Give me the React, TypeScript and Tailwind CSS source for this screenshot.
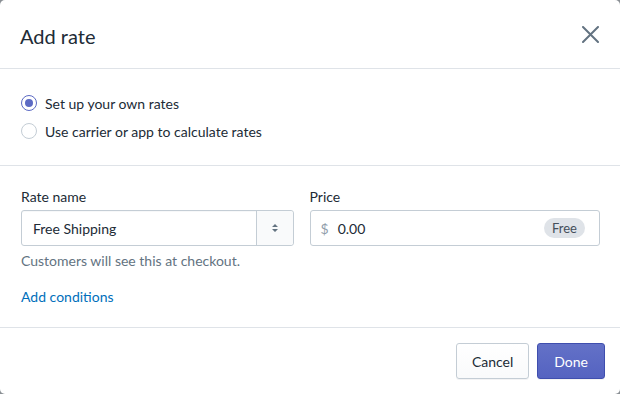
import React from "react";

export default function App() {
  return (
    <div className="w-[620px] h-[394px] bg-[#8a8f94]" style={{ fontFamily: 'Lato, "Noto Sans", sans-serif' }}>
      <div className="w-full h-full bg-white rounded-[5px] flex flex-col text-[#212b36]">
        <div className="h-[69px] flex items-center justify-between pl-5 pr-[21px] border-b border-[#dfe3e8] shrink-0">
          <div className="text-[20px] leading-[28px] mt-[4px]">Add rate</div>
          <svg width="17" height="17" viewBox="0 0 17 17" className="text-[#637381]">
            <path d="M1 1 L16 16 M16 1 L1 16" stroke="currentColor" strokeWidth="2" strokeLinecap="round" />
          </svg>
        </div>
        <div className="h-[97px] border-b border-[#dfe3e8] flex flex-col pl-[21px] pt-[26px] gap-[12px] text-[14px] shrink-0">
          <label className="flex items-center gap-[8px] h-[16px]">
            <span className="w-[16px] h-[16px] rounded-full border border-[#5c6ac4] flex items-center justify-center bg-white">
              <span className="w-[8px] h-[8px] rounded-full bg-[#5c6ac4]" />
            </span>
            <span>Set up your own rates</span>
          </label>
          <label className="flex items-center gap-[8px] h-[16px]">
            <span className="w-[16px] h-[16px] rounded-full border border-[#c4cdd5] bg-white" />
            <span>Use carrier or app to calculate rates</span>
          </label>
        </div>
        <div className="h-[162px] border-b border-[#dfe3e8] pt-[21px] px-[20px] shrink-0 text-[14px]">
          <div className="flex gap-[16px]">
            <div className="w-[274px]">
              <div className="leading-[20px] mb-[3px] ml-px">Rate name</div>
              <div className="h-[36px] ml-px flex border border-[#c4cdd5] rounded-[3px] shadow-[inset_0_1px_0_rgba(99,115,129,0.05)]">
                <div className="flex-1 flex items-center pl-[11px]">Free Shipping</div>
                <div className="w-[37px] border-l border-[#c4cdd5] bg-[#f9fafb] rounded-r-[3px] flex items-center justify-center">
                  <svg width="8" height="10" viewBox="0 0 8 10">
                    <path d="M4 1 L7 4 H1 Z M4 9 L1 6 H7 Z" fill="#637381" />
                  </svg>
                </div>
              </div>
              <div className="mt-[5px] leading-[20px] text-[#637381] ml-px">Customers will see this at checkout.</div>
              <div className="mt-[16px] leading-[20px] text-[#006fbb] ml-px">Add conditions</div>
            </div>
            <div className="w-[291px]">
              <div className="leading-[20px] mb-[3px]">Price</div>
              <div className="h-[36px] flex items-center border border-[#c4cdd5] rounded-[3px] pl-[10px] pr-[14px]">
                <span className="text-[#919eab] mr-[9px]">$</span>
                <span className="flex-1">0.00</span>
                <span className="bg-[#dfe3e8] text-[#454f5b] rounded-full px-[8px] h-[20px] leading-[20px] text-[13px]">Free</span>
              </div>
            </div>
          </div>
        </div>
        <div className="flex-1 flex items-center justify-end gap-[8px] pr-[15px] text-[14px]">
          <button className="h-[36px] px-[15px] border border-[#c4cdd5] rounded-[3px] bg-gradient-to-b from-white to-[#f9fafb] text-[#212b36] shadow-[0_1px_0_rgba(22,29,37,0.05)]">Cancel</button>
          <button className="h-[36px] px-[16px] border border-[#3f4eae] rounded-[3px] bg-gradient-to-b from-[#6371c7] to-[#5563c1] text-white shadow-[0_1px_0_rgba(22,29,37,0.05)]">Done</button>
        </div>
      </div>
    </div>
  );
}
